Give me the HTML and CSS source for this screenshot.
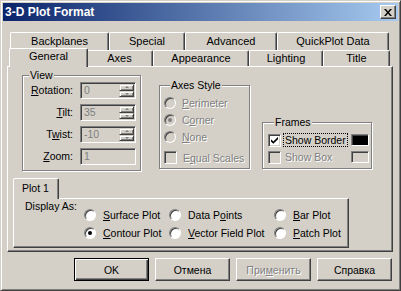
FILE: index.html
```html
<!DOCTYPE html>
<html lang="ru">
<head>
  <meta charset="UTF-8" />
  <title>3-D Plot Format</title>
  <link rel="stylesheet" href="styles.css">
</head>
<body>

<div class="window">
  <div class="titlebar">
    <span class="title">3-D Plot Format</span>
    <span class="close">
      <svg width="8" height="7" viewBox="0 0 8 7"><path d="M0 0h2l2 2.4 2-2.4h2l-3 3.5 3 3.5h-2l-2-2.4-2 2.4h-2l3-3.5z" fill="#000"/></svg>
    </span>
  </div>

  <div class="tabs">
    <div class="tabrow back">
      <div class="tab" style="width:99px">Backplanes</div>
      <div class="tab" style="width:76px">Special</div>
      <div class="tab" style="width:92px">Advanced</div>
      <div class="tab" style="width:112px">QuickPlot Data</div>
    </div>
    <div class="tabrow front">
      <div class="tab active" style="width:79px">General</div>
      <div class="tab" style="width:67px">Axes</div>
      <div class="tab" style="width:96px">Appearance</div>
      <div class="tab" style="width:74px">Lighting</div>
      <div class="tab" style="width:67px">Title</div>
    </div>

    <div class="page">
      <div class="top">
        <fieldset class="group view">
          <legend>View</legend>
          <div class="view-grid">
            <label><u>R</u>otation:</label>
            <div class="field"><span class="val">0</span><span class="spin"><i class="up"></i><i class="down"></i></span></div>
            <label><u>T</u>ilt:</label>
            <div class="field"><span class="val">35</span><span class="spin"><i class="up"></i><i class="down"></i></span></div>
            <label>T<u>w</u>ist:</label>
            <div class="field"><span class="val">-10</span><span class="spin"><i class="up"></i><i class="down"></i></span></div>
            <label><u>Z</u>oom:</label>
            <div class="field"><span class="val">1</span></div>
          </div>
        </fieldset>

        <fieldset class="group axes">
          <legend>Axes Style</legend>
          <div class="opt dis"><span class="radio off"></span><span><u>P</u>erimeter</span></div>
          <div class="opt dis"><span class="radio off on"></span><span>C<u>o</u>rner</span></div>
          <div class="opt dis"><span class="radio off"></span><span><u>N</u>one</span></div>
          <div class="opt dis scales"><span class="check off"></span><span>E<u>q</u>ual Scales</span></div>
        </fieldset>

        <fieldset class="group frames">
          <legend>Frames</legend>
          <div class="frow">
            <span class="check"><svg width="7" height="7" viewBox="0 0 7 7"><path d="M0 2.2l2.3 2.3 4.7-4.6v2.3l-4.7 4.6-2.3-2.3z" fill="#000"/></svg></span>
            <span class="focus">Show Border</span>
            <span class="swatch black"></span>
          </div>
          <div class="frow dis">
            <span class="check off"></span>
            <span class="plain">Show Box</span>
            <span class="swatch"></span>
          </div>
        </fieldset>
      </div>

      <div class="plot">
        <div class="plot-tab">Plot 1</div>
        <div class="plot-panel">
          <span class="display-label">Display As:</span>
          <div class="plot-grid">
            <div class="opt"><span class="radio"></span><span><u>S</u>urface Plot</span></div>
            <div class="opt"><span class="radio"></span><span>Data P<u>o</u>ints</span></div>
            <div class="opt"><span class="radio"></span><span><u>B</u>ar Plot</span></div>
            <div class="opt"><span class="radio on"></span><span><u>C</u>ontour Plot</span></div>
            <div class="opt"><span class="radio"></span><span><u>V</u>ector Field Plot</span></div>
            <div class="opt"><span class="radio"></span><span><u>P</u>atch Plot</span></div>
          </div>
        </div>
      </div>
    </div>
  </div>

  <div class="buttons">
    <button class="btn default">OK</button>
    <button class="btn">Отмена</button>
    <button class="btn dis">При<u>м</u>енить</button>
    <button class="btn">Справка</button>
  </div>
</div>

</body>
</html>
```

FILE: styles.css
```css
body { margin: 0; background: #d4d0c8; font-family: "Liberation Sans", Arial, sans-serif; font-size: 10.5px; color: #000; }
u { text-decoration: underline; text-underline-offset: 1px; }

.window { width: 401px; height: 291px; box-sizing: border-box; padding: 2px; border: 1px solid; border-color: #d4d0c8 #404040 #404040 #d4d0c8; box-shadow: inset 1px 1px #fff, inset -1px -1px #808080; }

.titlebar { height: 18px; display: flex; align-items: center; justify-content: space-between; padding-left: 2px; background: linear-gradient(to right, #0a246a, #a6caf0); }
.title { color: #fff; font-weight: bold; font-size: 12px; }
.close { width: 16px; height: 14px; box-sizing: border-box; margin-right: 2px; display: flex; align-items: center; justify-content: center; background: #d4d0c8; border: 1px solid; border-color: #fff #404040 #404040 #fff; box-shadow: inset -1px -1px #808080; }

.tabs { margin: 11px 5px 0 4px; }
.tabrow { display: flex; }
.tabrow.back { height: 18px; margin-left: 3px; }
.tabrow.front { height: 16px; margin-left: 4px; }
.tab { box-sizing: border-box; flex: none; text-align: center; font-size: 11px; background: #d4d0c8; border: 1px solid; border-bottom: none; border-color: #fff #404040 #fff #fff; border-radius: 2px 2px 0 0; box-shadow: inset -1px 0 #808080; }
.back .tab { line-height: 17px; }
.front .tab { line-height: 15px; }
.tab.active { height: 19px; margin: -2px -2px 0 -2px; position: relative; z-index: 1; }

.page { height: 186px; box-sizing: border-box; border: 1px solid; border-color: #fff #404040 #404040 #fff; box-shadow: inset -1px -1px #808080; }

.top { display: flex; align-items: flex-start; padding-left: 14px; margin-top: 2px; }

.group { margin: 0; padding: 0; min-width: 0; box-sizing: border-box; border: 1px solid #808080; box-shadow: 1px 1px 0 #fff, inset 1px 1px 0 #fff; }
.group legend { margin-left: 6px; padding: 0 1px; line-height: 13px; background: #d4d0c8; }

.view { width: 119px; padding: 0 4px 5px 0; }
.view-grid { display: grid; grid-template-columns: 50px 56px; grid-auto-rows: 17px; column-gap: 7px; row-gap: 5px; }
.view-grid label { text-align: right; line-height: 17px; }

.field { display: flex; box-sizing: border-box; height: 17px; padding: 1px; border: 1px solid; border-color: #808080 #fff #fff #808080; box-shadow: inset 1px 1px #404040, inset -1px -1px #d4d0c8; }
.val { flex: 1; padding-left: 2px; line-height: 13px; color: #808080; }
.spin { display: flex; flex-direction: column; width: 15px; }
.spin i { flex: 1; display: flex; align-items: center; justify-content: center; box-sizing: border-box; border: 1px solid; border-color: #d4d0c8 #404040 #404040 #d4d0c8; box-shadow: inset 1px 1px #fff, inset -1px -1px #808080; }
.spin i::before { content: ""; border-left: 2px solid transparent; border-right: 2px solid transparent; }
.spin .up::before { border-bottom: 2px solid #808080; }
.spin .down::before { border-top: 2px solid #808080; }

.axes { width: 91px; margin: 10px 0 0 18px; padding: 2px 0 2px 4px; }
.frames { width: 110px; margin: 47px 0 0 12px; padding: 3px 2px 3px 5px; }

.opt { display: flex; align-items: center; height: 17px; white-space: nowrap; }
.opt .radio { margin-right: 6px; }
.opt .check { margin-right: 6px; }
.scales { margin-top: 4px; }

.dis { color: #808080; text-shadow: 1px 1px #fff; }

.radio { flex: none; position: relative; width: 12px; height: 12px; box-sizing: border-box; border-radius: 50%; border: 1px solid; border-color: #808080 #fff #fff #808080; box-shadow: inset 1px 1px #404040; background: #fff; }
.radio.off { background: #d4d0c8; }
.radio.on::after { content: ""; position: absolute; left: 3px; top: 3px; width: 4px; height: 4px; border-radius: 50%; background: #000; }
.radio.off.on::after { background: #808080; }

.check { flex: none; display: flex; align-items: center; justify-content: center; width: 13px; height: 13px; box-sizing: border-box; border: 1px solid; border-color: #808080 #fff #fff #808080; box-shadow: inset 1px 1px #404040, inset -1px -1px #d4d0c8; background: #fff; }
.check.off { background: #d4d0c8; }

.frow { display: flex; align-items: center; height: 16px; }
.frow + .frow { margin-top: 1px; }
.focus { margin-left: 2px; padding: 0 1px; line-height: 12px; border: 1px dotted #000; }
.plain { margin-left: 4px; }
.swatch { margin-left: auto; flex: none; width: 18px; height: 12px; box-sizing: border-box; border: 1px solid; border-color: #808080 #fff #fff #808080; box-shadow: inset 1px 1px #404040; }
.swatch.black { background: #000; }

.plot { margin: 7px 0 0 5px; }
.plot-tab { position: relative; z-index: 1; width: 46px; height: 21px; margin-bottom: -1px; box-sizing: border-box; padding-left: 8px; line-height: 19px; background: #d4d0c8; border: 1px solid; border-bottom: none; border-color: #fff #404040 #fff #fff; border-radius: 2px 2px 0 0; box-shadow: inset -1px 0 #808080; }
.plot-panel { display: flex; width: 336px; height: 50px; box-sizing: border-box; padding: 1px 0 0 11px; border: 1px solid; border-color: #fff #404040 #404040 #fff; box-shadow: inset -1px -1px #808080; }
.display-label { width: 59px; flex: none; line-height: 13px; }
.plot-grid { display: grid; grid-template-columns: 85px 105px auto; grid-auto-rows: 18px; margin-top: 6px; }
.plot-grid .radio { margin-right: 7px; }

.buttons { display: flex; justify-content: flex-end; gap: 6px; margin-top: 6px; padding-right: 6px; }
.btn { width: 75px; height: 23px; box-sizing: border-box; padding: 0; font: inherit; color: #000; background: #d4d0c8; border: 1px solid; border-color: #fff #404040 #404040 #fff; box-shadow: inset -1px -1px #808080; }
.btn.default { border-color: #000; box-shadow: inset 1px 1px #fff, inset -1px -1px #404040, inset -2px -2px #808080; }
.btn.dis { color: #808080; text-shadow: 1px 1px #fff; }
```
